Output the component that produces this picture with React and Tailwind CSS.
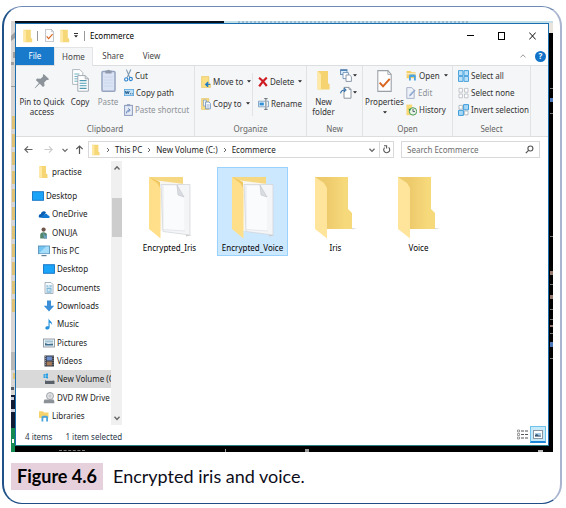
import React from "react";

/* ---------- icons ---------- */

const MiniFolder = ({ className = "w-[10px] h-[14px]" }) => (
  <svg viewBox="0 0 10 14" className={`shrink-0 ${className}`} aria-hidden="true">
    <path d="M.5.800h7.300v8l1.400 1v3.400H.5z" fill="#f6d878" />
    <path d="M.5.800L3 2v11.200L.5 12.400z" fill="#ffe9a4" />
  </svg>
);

const CheckDoc = ({ className = "w-[9px] h-[13px]" }) => (
  <svg viewBox="0 0 14 21" className={`shrink-0 ${className}`} aria-hidden="true">
    <path d="M.6.6h9.6l3.2 3.6v16.2H.6z" fill="#fdfdfd" stroke="#9aa0a8" strokeWidth="1" />
    <path d="M10.2.6v3.6h3.2" fill="none" stroke="#9aa0a8" strokeWidth=".8" />
    <path d="M2.4 12l3.2 3.6L12 8.4" fill="none" stroke="#d9651f" strokeWidth="1.9" />
  </svg>
);

const PinIcon = () => (
  <svg viewBox="0 0 16 16" className="h-4 w-4" aria-hidden="true">
    <path d="M9.6 1l5.6 5.2-1.6.9-.9-.2-2.5 2.5.3 3.4-1.5 1.3-3.2-3.3L1.4 15l-.8.3.4-.9 3.9-4.4L1.8 7l1.4-1.4 3.4.2L9 3.4l-.2-1z" fill="#8d939b" />
  </svg>
);

const CopyPages = ({ className = "w-[17px] h-[23px]" }) => (
  <svg viewBox="0 0 17 23" className={`shrink-0 ${className}`} aria-hidden="true">
    <path d="M.6.6h7.2l3 3v11.8H.6z" fill="#fff" stroke="#a9b1b9" strokeWidth=".9" />
    <path d="M2.4 5h5M2.4 7.400h5M2.4 9.800h5M2.4 12.200h5" stroke="#6fb0c2" strokeWidth="1" />
    <path d="M5.8 6.6h7.4l3.2 3.2v12.4H5.8z" fill="#fff" stroke="#9aa3ac" strokeWidth=".9" />
    <path d="M13.2 6.6v3.200h3.200" fill="none" stroke="#9aa3ac" strokeWidth=".9" />
    <path d="M7.6 11.600h7M7.6 14.200h7M7.6 16.800h7M7.6 19.400h7" stroke="#4f9ab2" strokeWidth="1.100" />
  </svg>
);

const PasteIcon = () => (
  <svg viewBox="0 0 15 23" className="h-[23px] w-[15px]" aria-hidden="true">
    <rect x="1" y="2.6" width="13" height="19.6" rx="1" fill="#dbe4f4" stroke="#97a4c0" strokeWidth="1.5" />
    <path d="M4.4 1.6h1.8a1.4 1.4 0 0 1 2.6 0h1.8v3H4.4z" fill="#8f99ac" />
    <path d="M3 8h9M3 11h9M3 14h9M3 17h9" stroke="#c6d3ea" strokeWidth=".8" />
  </svg>
);

const CutIcon = () => (
  <svg viewBox="0 0 9 13" className="h-[13px] w-[9px] shrink-0" aria-hidden="true">
    <path d="M2.4.6l3.4 8M6.8.6l-3.6 8" stroke="#7f99b0" strokeWidth="1.1" fill="none" />
    <circle cx="2.2" cy="10.4" r="1.6" fill="none" stroke="#2f86cf" strokeWidth="1.1" />
    <circle cx="6.8" cy="10" r="1.6" fill="none" stroke="#2f86cf" strokeWidth="1.1" />
  </svg>
);

const PathIcon = () => (
  <svg viewBox="0 0 10 7" className="h-[7px] w-[10px] shrink-0" aria-hidden="true">
    <rect x=".4" y=".4" width="9.2" height="6.2" fill="#bfe0f7" stroke="#58a6dc" strokeWidth=".8" />
    <path d="M1.2 2l1 2.8 1-2.4 1 2.4 1-2.8" fill="none" stroke="#174f80" strokeWidth=".9" />
    <path d="M6 4.8h1M7.8 4.8h1" stroke="#174f80" strokeWidth=".9" />
  </svg>
);

const PasteShortcutIcon = () => (
  <svg viewBox="0 0 9 12" className="h-3 w-[9px] shrink-0" aria-hidden="true">
    <rect x=".6" y="1.4" width="7.8" height="10" fill="#e4ebf7" stroke="#8b9cbc" />
    <rect x="2.8" y=".2" width="3.4" height="2" fill="#8b9cbc" />
    <path d="M2.6 9.4c0-2.400 1-3.200 2.800-3.200M4.200 4.400l2 1.800-2 1.800" fill="none" stroke="#5f7fb4" strokeWidth="1" />
  </svg>
);

const MoveIcon = () => (
  <svg viewBox="0 0 10 12" className="h-3 w-[10px] shrink-0" aria-hidden="true">
    <path d="M.6.6h7.2v6L9.400 8v3.400H.6z" fill="#fbdf85" stroke="#e3bd55" strokeWidth=".6" />
    <path d="M9.200 8.400H5M6.800 6l-2.600 2.400 2.600 2.600z" stroke="#1f7ac8" strokeWidth="1" fill="#1f7ac8" />
  </svg>
);

const CopyToIcon = () => (
  <svg viewBox="0 0 10 12" className="h-3 w-[10px] shrink-0" aria-hidden="true">
    <path d="M.6.6h7.200v10.800H.6z" fill="#fbdf85" stroke="#e3bd55" strokeWidth=".6" />
    <path d="M2.400 2h3v6h-3z" fill="#eef4fa" stroke="#7b93b5" strokeWidth=".7" />
    <path d="M4.600 4h3.400l1.400 1.400v5.400H4.600z" fill="#fff" stroke="#5f87b8" strokeWidth=".8" />
    <path d="M5.600 7h2.800M5.600 9h2.800" stroke="#5f87b8" strokeWidth=".7" />
  </svg>
);

const DeleteIcon = () => (
  <svg viewBox="0 0 10 10" className="h-[10px] w-[10px] shrink-0" aria-hidden="true">
    <path d="M1 .8c3.200 2.200 5.400 5 7.800 8.200M8.800.6C5.600 3.200 3.200 6 1.200 9.400" stroke="#cf1b22" strokeWidth="2.100" fill="none" />
  </svg>
);

const RenameIcon = () => (
  <svg viewBox="0 0 11 12" className="h-3 w-[11px] shrink-0" aria-hidden="true">
    <path d="M7 3.200H.5v5.600H7M8.800 3.200h1.700v5.600H8.800" fill="#e9f3fb" stroke="#7196b8" strokeWidth=".8" />
    <rect x="1.600" y="4.600" width="4.200" height="2.800" fill="#2f8fd8" />
    <path d="M6.200.6h3.400M7.900.6v10.800M6.200 11.400h3.400" stroke="#5b6570" strokeWidth=".9" />
  </svg>
);

const NewFolderIcon = () => (
  <svg viewBox="0 0 13 21" className="h-[21px] w-[13px]" aria-hidden="true">
    <path d="M.6 1h10.400v12l1.600 1.400v5.200H.6z" fill="#f4d370" />
    <path d="M.6 1L4 4.200v16.400L.6 18.800z" fill="#ffe9a6" />
  </svg>
);

const NewItemIcon = () => (
  <svg viewBox="0 0 12 13" className="h-[13px] w-3" aria-hidden="true">
    <rect x=".6" y=".6" width="6.400" height="5" fill="#e1eefa" stroke="#5f87b0" strokeWidth=".9" />
    <path d="M.6 1.400H7" stroke="#3c7cb8" />
    <path d="M3 3.600h5.400v6H3z" fill="#fff" stroke="#6f93b8" strokeWidth=".9" />
    <path d="M6 6h3.600l1.800 1.600v4.800H6z" fill="#fff" stroke="#7f8fa3" strokeWidth=".9" />
  </svg>
);

const EasyAccessIcon = () => (
  <svg viewBox="0 0 12 13" className="h-[13px] w-3" aria-hidden="true">
    <path d="M4 1.400h5l2 2v8.800H4z" fill="#fff" stroke="#808a96" strokeWidth=".9" />
    <path d="M9 1.400v2h2" fill="none" stroke="#808a96" strokeWidth=".8" />
    <path d="M.6 7.400C.8 4.600 2.200 4 5 4M4 2.200L6 4 4 5.800" stroke="#2f6ea8" strokeWidth="1.100" fill="none" />
  </svg>
);

const OpenIcon = () => (
  <svg viewBox="0 0 11 11" className="h-[11px] w-[11px] shrink-0" aria-hidden="true">
    <path d="M.6 1h4l1 1.200h4v6H.6z" fill="#f7cf67" />
    <path d="M.6 3.200h9v1.200H.6z" fill="#fff" opacity=".7" />
    <path d="M3 10.400V6a1.400 1.400 0 0 1 1.400-1.400h4A1.400 1.400 0 0 1 9.800 6v4.400H8V7H4.800v3.400z" fill="#4ba3e0" />
  </svg>
);

const EditIcon = () => (
  <svg viewBox="0 0 10 12" className="h-3 w-[10px] shrink-0" aria-hidden="true">
    <path d="M.8.6h5l2.400 2.400v8.400H.8z" fill="#edf1f8" stroke="#a1adc4" strokeWidth=".9" />
    <path d="M3 9.600l.6-2L8.400 2.400l1.200 1.200-4.800 5.200z" fill="#93a8cf" />
  </svg>
);

const HistoryIcon = () => (
  <svg viewBox="0 0 11 12" className="h-3 w-[11px] shrink-0" aria-hidden="true">
    <path d="M.4.600h5.800v10.600H.4z" fill="#f8d977" />
    <circle cx="7" cy="7.400" r="3.700" fill="#eaf5ea" stroke="#4d9a56" strokeWidth="1" />
    <path d="M7 5v2.600h2" stroke="#44505c" strokeWidth=".9" fill="none" />
    <path d="M2.600 4.400l2.600 1-2 2z" fill="#2e9a42" />
  </svg>
);

const SelectAllIcon = () => (
  <svg viewBox="0 0 11 12" className="h-3 w-[11px] shrink-0" aria-hidden="true">
    <g fill="#b9e0f8" stroke="#4aa3dd" strokeWidth="1">
      <path d="M.5.6H5v5H.5zM6 .6h4.500v5H6zM.5 6.400H5v5H.5zM6 6.400h4.500v5H6z" />
    </g>
  </svg>
);

const SelectNoneIcon = () => (
  <svg viewBox="0 0 11 12" className="h-3 w-[11px] shrink-0" aria-hidden="true">
    <path d="M1 1.400h3.400v3.800H1zM6.600 1.400H10v3.800H6.600zM1 7h3.400v3.800H1zM6.600 7H10v3.800H6.600z" fill="#fff" stroke="#b2b8bf" strokeWidth=".8" />
  </svg>
);

const InvertIcon = () => (
  <svg viewBox="0 0 11 12" className="h-3 w-[11px] shrink-0" aria-hidden="true">
    <path d="M1 1.400h3.400v3.800H1zM6.600 7H10v3.800H6.600z" fill="#fff" stroke="#a5adb5" strokeWidth=".8" />
    <path d="M5.600.6h4.900v5.200H5.600zM.5 6.400h4.900v5H.5z" fill="#a8d8f6" stroke="#3f9ddb" strokeWidth="1" />
  </svg>
);

const Caret = () => (
  <svg viewBox="0 0 4 3" className="h-[3px] w-1 shrink-0" aria-hidden="true">
    <path d="M0 .3h4L2 2.500z" fill="#222" />
  </svg>
);

const Chevron = ({ className, d, stroke = "#666", width = 1 }) => (
  <svg viewBox="0 0 8 8" className={`h-2 w-2 shrink-0 ${className || ""}`} aria-hidden="true">
    <path d={d} fill="none" stroke={stroke} strokeWidth={width} />
  </svg>
);
const RIGHT = "M3 2l2 2-2 2";
const DOWN = "M1.500 2.800L4 5.400l2.500-2.600";
const UP = "M1.500 5.400L4 2.800l2.500 2.600";

/* Navigation pane pictures, each on a 12 × 12 field */
const paneArt = {
  folder: <><path d="M1.500 0H8v7.500l1.500.800V12h-8z" fill="#f6d573" /><path d="M1.500 0L4 1.200V12l-2.500-.6z" fill="#ffe8a0" /></>,
  monitor: <><rect x=".5" y="1.700" width="11" height="8.600" fill="#1ba4f8" stroke="#1673c4" strokeWidth=".9" /></>,
  cloud: <><path d="M1 9.500C.2 7.600 1.200 6 3 6c.2-2.500 3.400-3.600 5-1.600L4.200 9.800z" fill="#0a5fb4" /><path d="M4.200 10c-1-1.800.4-3.300 1.800-3 .8-2 3.400-1.600 3.800.2 2 .2 2.400 2.400 1.200 2.800z" fill="#1277d0" /></>,
  user: <><circle cx="5.600" cy="2.600" r="2.100" fill="#6b5648" /><path d="M2.200 11.600V8c0-2 1.200-2.800 3.200-2.800S9 6 9 8v3.600z" fill="#52876c" /><path d="M5 5.400l2.500 3.500L9 7v4.600H6z" fill="#6aa0bd" /></>,
  pc: <><rect x=".5" y="1" width="11" height="7.600" fill="#72c4f3" stroke="#5b93b8" strokeWidth=".9" /><path d="M1 8.200L8 1.400h3v6.800z" fill="#a6ddfa" /><path d="M3.500 10.600h5" stroke="#5e7f95" strokeWidth="1.200" /></>,
  doc: <><path d="M2 .5h6l2 2v9H2z" fill="#f7fafc" stroke="#93a1ad" strokeWidth=".8" /><path d="M3.400 4h2M6.400 4h2.400M3.400 6.200h5.200M3.400 8h2M6.400 8h2.400M3.400 10h5.200" stroke="#469bc8" strokeWidth="1" /></>,
  down: <path d="M4 .5h4v5.300h3.200L6 11.500.8 5.800H4z" fill="#3a8fd8" />,
  music: <path d="M5.500.3c.3 2.400 4 2.900 3.600 6.700-.6-1.600-1.600-2-2.500-2.200v4.700c-.2 2.700-4.400 2.700-4.300.4.100-1.600 1.800-2 3.200-1.600z" fill="#2492dc" />,
  picture: <><rect x=".5" y="2" width="11" height="8" fill="#eef3f6" stroke="#8b98a2" strokeWidth=".9" /><path d="M2 3.500h8v2H2z" fill="#9fc3d6" /><path d="M2 8.500V6l3 1 5-.600v2.100z" fill="#3f6f8f" /></>,
  video: <><rect x="1.500" y=".5" width="9.500" height="11" fill="#33363e" /><path d="M2.500 1.200v10M10 1.200v10" stroke="#c9ccd2" strokeDasharray="1 1" strokeWidth=".8" /><path d="M3.600 1.500h5.300v4H3.600z" fill="#6d8fd0" /><path d="M3.600 6.500h5.300v4H3.600z" fill="#a77c5b" /></>,
  drive: <><path d="M.5 1.200l1.800-.3v1.800H.5zM2.800.8L5 .5v2.200H2.800zM.5 3.200h1.800V5L.5 4.700zM2.800 3.200H5v2.200l-2.200-.3z" fill="#1a9be6" /><path d="M2 7h8l1.500 1.500v2.500H2z" fill="#5a6067" /><path d="M2.500 7h7l1 1H2.500z" fill="#bfc4c9" /></>,
  dvd: <><circle cx="7" cy="4" r="3.500" fill="#e1e3e6" stroke="#979ca2" strokeWidth=".9" /><circle cx="7" cy="4" r="1" fill="#fff" stroke="#979ca2" strokeWidth=".6" /><path d="M1.500 7.500h9l.8 1.500v2.200H.8V9z" fill="#8d9298" /></>,
  library: <><path d="M1 1.200h4l1 1.200h4.500V8H1z" fill="#f7d36f" /><path d="M3.500 11.500V7.200A1.500 1.500 0 0 1 5 5.700h3.500A1.500 1.500 0 0 1 10 7.200v4.300H8.200V7.800H5.300v3.700z" fill="#4ba3e0" /></>,
};
const PaneIcon = ({ name }) => (
  <svg viewBox="0 0 12 12" className="h-3 w-3 shrink-0" aria-hidden="true">{paneArt[name]}</svg>
);

const EmptyFolder = () => (
  <svg viewBox="0 0 44 66" className="h-[66px] w-[44px]" aria-hidden="true">
    <defs>
      <linearGradient id="folderBack" x1="0" x2="1" y1="0" y2="0">
        <stop offset=".3" stopColor="#edca6c" />
        <stop offset=".8" stopColor="#f6d97a" />
      </linearGradient>
    </defs>
    <path d="M1 3h33v32l4 4v16H1z" fill="url(#folderBack)" />
    <path d="M1 3l9 6 3 5v50.500L1 55z" fill="#ffe59b" />
    <path d="M38 54h5l-5 1.500z" fill="#ddd" />
  </svg>
);

const FullFolder = () => (
  <svg viewBox="0 0 44 66" className="h-[66px] w-[44px]" aria-hidden="true">
    <path d="M1 3h34v12H10z" fill="#f6d883" />
    <path d="M9 6.500l27 3.500v44l-24 3z" fill="#f8f6f0" />
    <path d="M13 10.500h29V61l-27-3.500z" fill="#f4f5f7" stroke="#cfd2d7" strokeWidth=".7" />
    <path d="M15 12h14l7 11v34l-21-1.500z" fill="#fafbfd" />
    <path d="M15 12v43.500l22 1.500" fill="none" stroke="#dcdfe4" strokeWidth=".7" />
    <path d="M29 11l7 12-6-2z" fill="#d9dce1" stroke="#bfc3ca" strokeWidth=".6" />
    <path d="M38 61h6l-6 1.500z" fill="#ccc" />
    <path d="M1 3l8 6 3.500 5.500v50L1 55z" fill="#ffdf8a" />
    <path d="M1 3l8 6 3 5V8z" fill="#f1c75f" />
  </svg>
);

/* ---------- ribbon ---------- */

const SmallCommand = ({ icon, label, caret, muted }) => (
  <button className={`flex h-[17px] items-center gap-[2px] whitespace-nowrap ${muted ? "text-[#8d9298]" : "text-[#333]"}`}>
    {icon}
    <span>{label}</span>
    {caret && <span className="pl-[2px]"><Caret /></span>}
  </button>
);

const BigCommand = ({ icon, lines, caret, muted, className = "" }) => (
  <button className={`flex flex-col items-center leading-[10px] ${muted ? "text-[#8d9298]" : "text-[#333]"} ${className}`}>
    <span className="mb-[3px] flex h-[27px] items-center">{icon}</span>
    {lines.map((l) => <span key={l} className="whitespace-nowrap">{l}</span>)}
    {caret && <span className="flex h-[10px] items-center"><Caret /></span>}
  </button>
);

const Group = ({ title, className, children }) => (
  <section className={`flex shrink-0 flex-col border-r border-[#e2e3e5] ${className}`} aria-label={title}>
    <div className="flex h-[56px] pt-px">{children}</div>
    <h2 className="text-center leading-[14px] text-[#666]">{title}</h2>
  </section>
);

const Ribbon = () => (
  <div className="flex h-[72px] border-y border-[#dcdddf] bg-[#f5f6f7]">
    <Group title="Clipboard" className="w-[179px]">
      <BigCommand icon={<PinIcon />} lines={["Pin to Quick", "access"]} className="w-[52px]" />
      <BigCommand icon={<CopyPages />} lines={["Copy"]} className="w-6" />
      <BigCommand icon={<PasteIcon />} lines={["Paste"]} muted className="w-8" />
      <div className="flex flex-col">
        <SmallCommand icon={<CutIcon />} label="Cut" />
        <SmallCommand icon={<PathIcon />} label="Copy path" />
        <SmallCommand icon={<PasteShortcutIcon />} label="Paste shortcut" muted />
      </div>
    </Group>
    <Group title="Organize" className="w-[112px]">
      <div className="my-[6px] flex w-[58px] shrink-0 flex-col gap-[5px] border-r border-[#e2e3e5] pl-[6px]">
        <SmallCommand icon={<MoveIcon />} label="Move to" caret />
        <SmallCommand icon={<CopyToIcon />} label="Copy to" caret />
      </div>
      <div className="my-[6px] flex flex-col gap-[5px] pl-[5px]">
        <SmallCommand icon={<DeleteIcon />} label="Delete" caret />
        <SmallCommand icon={<RenameIcon />} label="Rename" />
      </div>
    </Group>
    <Group title="New" className="w-[56px]">
      <BigCommand icon={<NewFolderIcon />} lines={["New", "folder"]} className="w-[33px]" />
      <div className="flex flex-col">
        <button aria-label="New item" className="flex h-[17px] items-center gap-px"><NewItemIcon /><Caret /></button>
        <button aria-label="Easy access" className="flex h-[17px] items-center gap-px"><EasyAccessIcon /><Caret /></button>
      </div>
    </Group>
    <Group title="Open" className="w-[90px]">
      <BigCommand icon={<CheckDoc className="h-[22px] w-[15px]" />} lines={["Properties"]} caret className="w-[43px]" />
      <div className="flex flex-col">
        <SmallCommand icon={<OpenIcon />} label="Open" caret />
        <SmallCommand icon={<EditIcon />} label="Edit" muted />
        <SmallCommand icon={<HistoryIcon />} label="History" />
      </div>
    </Group>
    <Group title="Select" className="w-[78px]">
      <div className="flex flex-col pl-[5px]">
        <SmallCommand icon={<SelectAllIcon />} label="Select all" />
        <SmallCommand icon={<SelectNoneIcon />} label="Select none" />
        <SmallCommand icon={<InvertIcon />} label="Invert selection" />
      </div>
    </Group>
  </div>
);

/* ---------- window parts ---------- */

const TitleBar = () => (
  <header className="flex h-[23px] items-center pl-[7px] pr-3">
    <MiniFolder />
    <span className="ml-1 h-[10px] w-px bg-[#999]" />
    <button aria-label="Properties" className="ml-[7px]"><CheckDoc /></button>
    <button aria-label="New folder" className="ml-[6px]"><MiniFolder /></button>
    <button aria-label="Customize toolbar" className="ml-1 flex flex-col items-center gap-px">
      <span className="h-px w-1 bg-[#333]" />
      <Caret />
    </button>
    <span className="ml-[6px] h-[10px] w-px bg-[#999]" />
    <h1 className="ml-[5px] flex-1 text-black">Ecommerce</h1>
    <div className="flex items-center gap-6">
      <button aria-label="Minimize" className="flex h-2 w-[7px] items-center"><span className="h-px w-full bg-black" /></button>
      <button aria-label="Maximize" className="h-2 w-[7px] border border-black" />
      <button aria-label="Close" className="h-2 w-[7px]">
        <svg viewBox="0 0 7 8" className="h-2 w-[7px]" aria-hidden="true"><path d="M.3.500l6.400 7M6.700.500l-6.400 7" stroke="#111" strokeWidth="1" /></svg>
      </button>
    </div>
  </header>
);

const Tabs = () => (
  <div className="flex h-[18px] items-stretch text-[#444]">
    <button className="w-[38px] bg-[#1979ca] text-white">File</button>
    <button className="-mb-px w-[39px] border border-b-0 border-[#e3e4e6] bg-[#f5f6f7]">Home</button>
    <button className="w-[40px]">Share</button>
    <button className="w-[37px]">View</button>
    <div className="flex flex-1 items-center justify-end gap-[8px] pr-[2px]">
      <button aria-label="Collapse ribbon"><Chevron d={UP} stroke="#999" /></button>
      <button aria-label="Help" className="flex h-[11px] w-[11px] items-center justify-center rounded-full bg-[#1272c8] font-bold text-white">?</button>
    </div>
  </div>
);

const AddressRow = () => (
  <div className="flex items-center pb-[3px] pl-2 pr-[8px] pt-[4px]">
    <button aria-label="Back">
      <svg viewBox="0 0 9 9" className="h-[9px] w-[9px]" aria-hidden="true"><path d="M8.500 4.500H1M4 1.300L.8 4.500 4 7.700" fill="none" stroke="#666" strokeWidth="1.200" /></svg>
    </button>
    <button aria-label="Forward" className="ml-[11px]">
      <svg viewBox="0 0 9 9" className="h-[9px] w-[9px]" aria-hidden="true"><path d="M.5 4.500H8M5 1.300l3.200 3.200L5 7.700" fill="none" stroke="#ccc" strokeWidth="1.200" /></svg>
    </button>
    <button aria-label="Recent locations" className="ml-[8px]"><Chevron d={DOWN} width={1.2} /></button>
    <button aria-label="Up" className="ml-[6px]">
      <svg viewBox="0 0 9 9" className="h-[9px] w-[9px]" aria-hidden="true"><path d="M4.500 9V1M1.300 4.200L4.500 1l3.200 3.200" fill="none" stroke="#555" strokeWidth="1.200" /></svg>
    </button>
    <div className="ml-1 flex h-[17px] flex-1 items-center gap-[3px] border border-[#d9d9d9] pl-[2px]">
      <MiniFolder className="h-3 w-[10px]" />
      <Chevron d={RIGHT} />
      <button>This PC</button>
      <Chevron d={RIGHT} />
      <button className="whitespace-nowrap">New Volume (C:)</button>
      <Chevron d={RIGHT} />
      <button>Ecommerce</button>
      <div className="flex flex-1 items-center justify-end self-stretch">
        <button aria-label="Previous locations" className="mr-[3px]"><Chevron d={DOWN} width={1.3} /></button>
        <button aria-label="Refresh" className="flex w-[14px] items-center justify-center self-stretch border-l border-[#d9d9d9]">
          <svg viewBox="0 0 9 9" className="h-[9px] w-[9px]" aria-hidden="true"><path d="M2.600 2.600a3 3 0 1 0 4-.2M2 .8h2.600v2.800" fill="none" stroke="#555" strokeWidth="1.100" /></svg>
        </button>
      </div>
    </div>
    <label className="ml-[7px] flex h-[17px] w-[139px] items-center border border-[#d9d9d9] pl-[5px] pr-[5px]">
      <input type="search" aria-label="Search Ecommerce" placeholder="Search Ecommerce" className="min-w-0 flex-1 outline-none placeholder:text-[#6d6d6d]" />
      <svg viewBox="0 0 9 9" className="h-[9px] w-[9px]" aria-hidden="true"><circle cx="5.400" cy="3.500" r="2.500" fill="none" stroke="#555" strokeWidth="1.100" /><path d="M3.600 5.300L.8 8.200" stroke="#555" strokeWidth="1.200" /></svg>
    </label>
  </div>
);

const paneItems = [
  ["monitor", "Desktop", 0],
  ["cloud", "OneDrive", 1],
  ["user", "ONUJA", 1],
  ["pc", "This PC", 1],
  ["monitor", "Desktop", 2],
  ["doc", "Documents", 2],
  ["down", "Downloads", 2],
  ["music", "Music", 2],
  ["picture", "Pictures", 2],
  ["video", "Videos", 2],
  ["drive", "New Volume (C", 2, true],
  ["dvd", "DVD RW Drive", 2],
  ["library", "Libraries", 1],
];
const indent = ["pl-4", "pl-[22px]", "pl-[27px]"];

const NavigationPane = () => (
  <nav aria-label="Folders" className="flex w-[106px] shrink-0">
    <div className="flex w-[95px] flex-col pt-[2px]">
      <button className="flex h-[18px] items-center gap-[2px] pl-[22px]"><PaneIcon name="folder" />practise</button>
      <ul className="mt-[6px] grid h-[238px] auto-rows-fr">
        {paneItems.map(([icon, label, level, selected], i) => (
          <li key={i} className={`flex ${selected ? "bg-[#d9d9d9]" : ""}`}>
            <button className={`flex items-center gap-[2px] whitespace-nowrap ${indent[level]}`}>
              <PaneIcon name={icon} />{label}
            </button>
          </li>
        ))}
      </ul>
    </div>
    <div className="flex w-[11px] flex-col items-center bg-[#f0f0f0] py-[3px]">
      <Chevron d={UP} width={1.4} />
      <span className="mt-[26px] h-[39px] w-[10px] bg-[#cdcdcd]" />
      <Chevron d={DOWN} width={1.4} className="mt-auto" />
    </div>
  </nav>
);

const files = [
  ["Encrypted_Iris", true],
  ["Encrypted_Voice", true, true],
  ["Iris", false],
  ["Voice", false],
];

const FileArea = () => (
  <ul className="flex flex-1 flex-wrap content-start gap-3 pl-3 pt-[6px]">
    {files.map(([name, full, selected]) => (
      <li key={name}>
        <button
          aria-pressed={!!selected}
          className={`flex h-[89px] w-[71px] flex-col items-center border pt-[6px] text-black ${selected ? "border-[#99d1ff] bg-[#cce8ff]" : "border-transparent"}`}
        >
          {full ? <FullFolder /> : <EmptyFolder />}
          <span className="mt-[2px] leading-[12px]">{name}</span>
        </button>
      </li>
    ))}
  </ul>
);

const StatusBar = () => (
  <footer className="flex h-[18px] items-end pl-[9px] pr-[2px] text-[#2f3a4d]">
    <span>4 items</span>
    <span className="ml-[13px] flex-1">1 item selected</span>
    <button aria-label="Details view" className="mr-[1px] flex h-[17px] items-center">
      <svg viewBox="0 0 12 11" className="h-[11px] w-3" aria-hidden="true">
        <path d="M.5 1h2v2h-2zM.5 4.500h2v2h-2zM.5 8h2v2h-2z" fill="#fff" stroke="#777" strokeWidth=".7" />
        <path d="M4 2h3M8 2h3M4 5.500h3M8 5.500h3M4 9h3M8 9h3" stroke="#555" strokeWidth="1" />
      </svg>
    </button>
    <button aria-label="Large icons view" className="flex h-[17px] w-4 items-center justify-center border border-b-2 border-[#6fc3ea] border-b-[#1b86d6] bg-[#c6eafa]">
      <svg viewBox="0 0 10 9" className="h-[9px] w-[10px]" aria-hidden="true">
        <rect x=".5" y=".5" width="9" height="8" fill="#fff" stroke="#8b98a2" />
        <path d="M2 3h6v3.500H2z" fill="#a9cbe4" />
        <path d="M2 6.500V5l2-1 1.500 1.500L8 5.800v.700z" fill="#35536c" />
      </svg>
    </button>
  </footer>
);

/* Slivers of the desktop that show round the window */
const LeftSliver = () => (
  <svg viewBox="0 0 4 423" preserveAspectRatio="none" className="w-1 shrink-0 self-stretch" aria-hidden="true">
    <rect width="4" height="423" fill="#d8d5d3" />
    <path d="M0 13l4-4v6l-4 3zM2 29h2v6H2zM0 39h3v3H0zM0 63h4v1H0z" fill="#9c9da0" />
    {[93, 111, 129, 148, 166, 184, 203, 221, 239, 258, 276].map((y) => (
      <rect key={y} x="1" y={y} width="3" height="13" fill="#dfc276" />
    ))}
    <rect y="329" width="4" height="18" fill="#b9b8b8" />
    <rect x="2" y="350" width="2" height="6" fill="#dfc276" />
    <path d="M0 364h3v3H0z" fill="#555a68" />
    <rect y="372" width="4" height="36" fill="#101a35" />
    <path d="M0 374h3v3H0zM0 386h4v3H0z" fill="#c8ccd8" />
    <rect y="405" width="4" height="18" fill="#128a50" />
    <path d="M1 416h2v4H1z" fill="#fff" />
  </svg>
);

const RightSliver = () => (
  <svg viewBox="0 0 4 423" preserveAspectRatio="none" className="w-1 shrink-0 self-stretch" aria-hidden="true">
    <rect width="4" height="423" fill="#000" />
    <rect width="4" height="10" fill="#e9e5dc" />
    <path d="M1 65h3v1H1zM1 90h3v1H1zM1 213h3v1H1zM1 261h3v1H1zM1 286h3v1H1zM1 296h3v1H1zM1 310h3v1H1zM1 335h3v1H1z" fill="#777" />
    <path d="M1 75h3v4H1zM1 319h3v5H1z" fill="#4a78b8" />
    <path d="M1 248h3v4H1zM1 272h3v4H1zM1 302h3v2H1z" fill="#96786c" />
  </svg>
);

const Screenshot = () => (
  <div className="overflow-hidden bg-black">
    <div className="flex h-[2px]">
      <span className="w-1 bg-[#d8d5d3]" />
      <span className="w-[209px] bg-[#08101c]" />
      <span className="flex flex-1 bg-[#c3dfea]">
        <span className="ml-[14px] w-[230px] border-t-2 border-dotted border-[#9dbccb]" />
      </span>
    </div>
    <div className="flex">
      <LeftSliver />
      <div className="min-w-0 flex-1 border border-[#1b6fae] border-b-[#2b7f86] bg-white font-['Noto_Sans',sans-serif] text-[8px] leading-[12px] text-[#1b1b1b]">
        <TitleBar />
        <Tabs />
        <Ribbon />
        <AddressRow />
        <div className="flex">
          <NavigationPane />
          <FileArea />
        </div>
        <StatusBar />
      </div>
      <RightSliver />
    </div>
    <div className="flex h-[6px] items-end">
      <span className="h-full w-1 bg-[#128a50]" />
      <span className="ml-11 h-[2px] w-[26px] border-t border-dashed border-[#777]" />
      <span className="ml-[140px] h-[3px] w-px bg-[#999]" />
      <span className="ml-[79px] h-[3px] w-1 bg-[#999]" />
      <span className="ml-auto mr-[10px] h-[2px] w-[5px] bg-[#bbb]" />
    </div>
  </div>
);

export default function App() {
  return (
    <main className="bg-white pb-[5px] pl-[2px] pr-1 pt-[6px]">
      <figure className="rounded-[20px] border border-l-2 border-r-2 border-b-[#1f4e87] border-l-[#1f5288] border-r-[#a9b4cf] border-t-[#6f8bb5] px-[7px] pb-[13px] pt-[14px]">
        <Screenshot />
        <figcaption className="mt-[11px] flex items-center font-['Lato',sans-serif] text-[18px] leading-[27px] text-[#0d0d1a]">
          <strong className="bg-[#e6d0dc] px-[6px] font-bold text-black">Figure 4.6</strong>
          <span className="ml-[10px]">Encrypted iris and voice.</span>
        </figcaption>
      </figure>
    </main>
  );
}
